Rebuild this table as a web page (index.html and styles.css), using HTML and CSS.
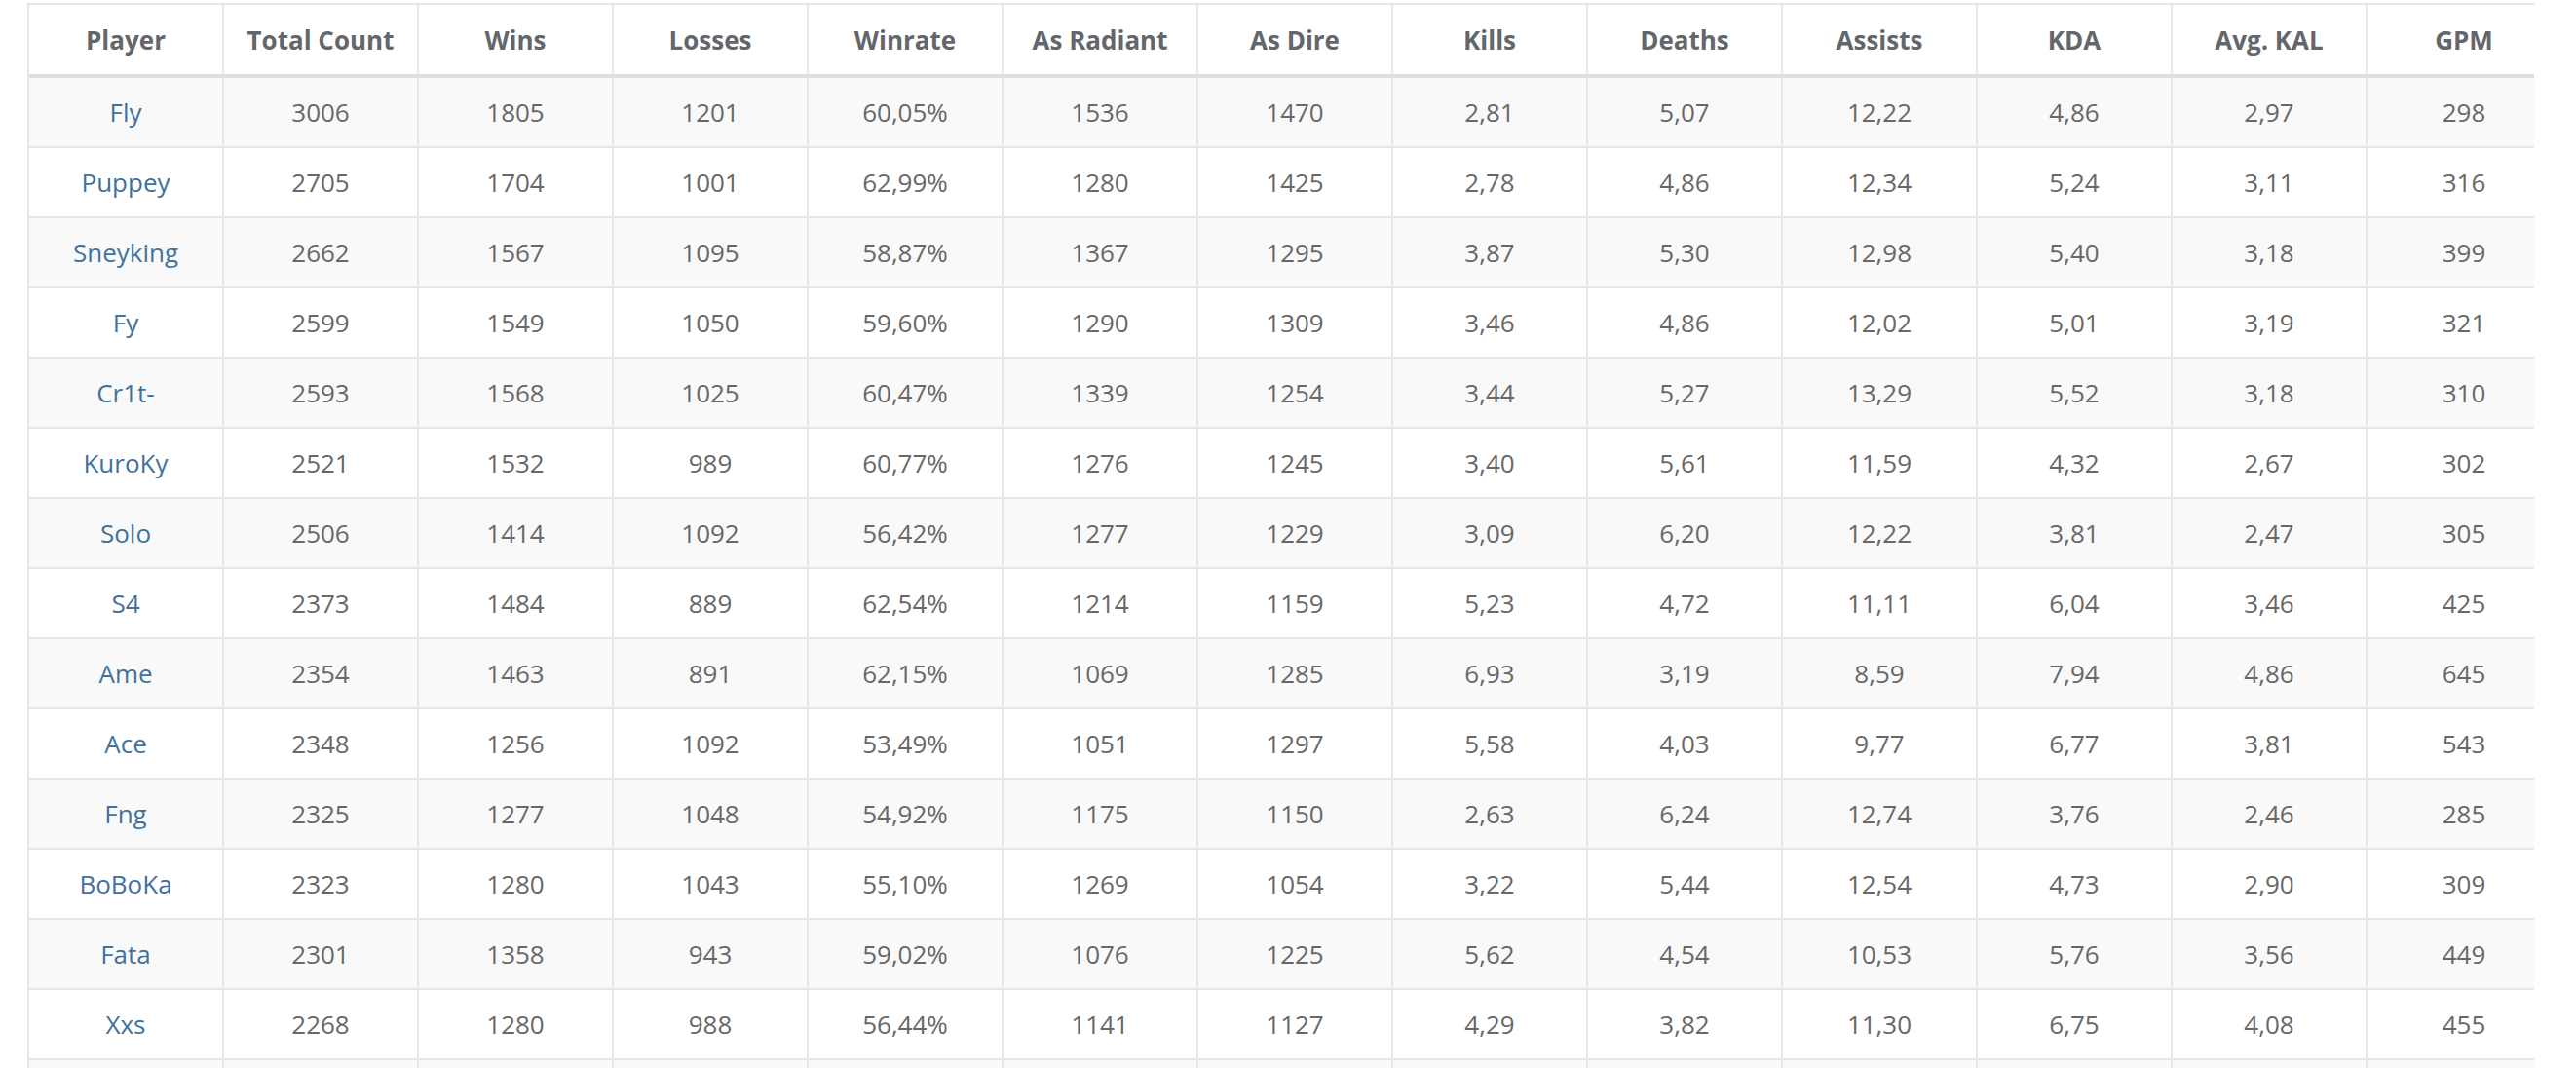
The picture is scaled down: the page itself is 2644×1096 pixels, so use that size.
FILE: index.html
```html
<!DOCTYPE html>
<html>
<head>
<meta charset="utf-8">
<link rel="stylesheet" href="styles.css">
</head>
<body>
<div class="wrap">
<table class="stats">
<colgroup>
<col class="col"><col class="col"><col class="col"><col class="col"><col class="col"><col class="col"><col class="col"><col class="col"><col class="col"><col class="col"><col class="col"><col class="col"><col class="col">
</colgroup>
<thead>
<tr><th>Player</th><th>Total Count</th><th>Wins</th><th>Losses</th><th>Winrate</th><th>As Radiant</th><th>As Dire</th><th>Kills</th><th>Deaths</th><th>Assists</th><th>KDA</th><th>Avg. KAL</th><th>GPM</th></tr>
</thead>
<tbody>
<tr><td><a href="#">Fly</a></td><td>3006</td><td>1805</td><td>1201</td><td>60,05%</td><td>1536</td><td>1470</td><td>2,81</td><td>5,07</td><td>12,22</td><td>4,86</td><td>2,97</td><td>298</td></tr>
<tr><td><a href="#">Puppey</a></td><td>2705</td><td>1704</td><td>1001</td><td>62,99%</td><td>1280</td><td>1425</td><td>2,78</td><td>4,86</td><td>12,34</td><td>5,24</td><td>3,11</td><td>316</td></tr>
<tr><td><a href="#">Sneyking</a></td><td>2662</td><td>1567</td><td>1095</td><td>58,87%</td><td>1367</td><td>1295</td><td>3,87</td><td>5,30</td><td>12,98</td><td>5,40</td><td>3,18</td><td>399</td></tr>
<tr><td><a href="#">Fy</a></td><td>2599</td><td>1549</td><td>1050</td><td>59,60%</td><td>1290</td><td>1309</td><td>3,46</td><td>4,86</td><td>12,02</td><td>5,01</td><td>3,19</td><td>321</td></tr>
<tr><td><a href="#">Cr1t-</a></td><td>2593</td><td>1568</td><td>1025</td><td>60,47%</td><td>1339</td><td>1254</td><td>3,44</td><td>5,27</td><td>13,29</td><td>5,52</td><td>3,18</td><td>310</td></tr>
<tr><td><a href="#">KuroKy</a></td><td>2521</td><td>1532</td><td>989</td><td>60,77%</td><td>1276</td><td>1245</td><td>3,40</td><td>5,61</td><td>11,59</td><td>4,32</td><td>2,67</td><td>302</td></tr>
<tr><td><a href="#">Solo</a></td><td>2506</td><td>1414</td><td>1092</td><td>56,42%</td><td>1277</td><td>1229</td><td>3,09</td><td>6,20</td><td>12,22</td><td>3,81</td><td>2,47</td><td>305</td></tr>
<tr><td><a href="#">S4</a></td><td>2373</td><td>1484</td><td>889</td><td>62,54%</td><td>1214</td><td>1159</td><td>5,23</td><td>4,72</td><td>11,11</td><td>6,04</td><td>3,46</td><td>425</td></tr>
<tr><td><a href="#">Ame</a></td><td>2354</td><td>1463</td><td>891</td><td>62,15%</td><td>1069</td><td>1285</td><td>6,93</td><td>3,19</td><td>8,59</td><td>7,94</td><td>4,86</td><td>645</td></tr>
<tr><td><a href="#">Ace</a></td><td>2348</td><td>1256</td><td>1092</td><td>53,49%</td><td>1051</td><td>1297</td><td>5,58</td><td>4,03</td><td>9,77</td><td>6,77</td><td>3,81</td><td>543</td></tr>
<tr><td><a href="#">Fng</a></td><td>2325</td><td>1277</td><td>1048</td><td>54,92%</td><td>1175</td><td>1150</td><td>2,63</td><td>6,24</td><td>12,74</td><td>3,76</td><td>2,46</td><td>285</td></tr>
<tr><td><a href="#">BoBoKa</a></td><td>2323</td><td>1280</td><td>1043</td><td>55,10%</td><td>1269</td><td>1054</td><td>3,22</td><td>5,44</td><td>12,54</td><td>4,73</td><td>2,90</td><td>309</td></tr>
<tr><td><a href="#">Fata</a></td><td>2301</td><td>1358</td><td>943</td><td>59,02%</td><td>1076</td><td>1225</td><td>5,62</td><td>4,54</td><td>10,53</td><td>5,76</td><td>3,56</td><td>449</td></tr>
<tr><td><a href="#">Xxs</a></td><td>2268</td><td>1280</td><td>988</td><td>56,44%</td><td>1141</td><td>1127</td><td>4,29</td><td>3,82</td><td>11,30</td><td>6,75</td><td>4,08</td><td>455</td></tr>
<tr class="last"><td></td><td></td><td></td><td></td><td></td><td></td><td></td><td></td><td></td><td></td><td></td><td></td><td></td></tr>
</tbody>
</table>
</div>
</body>
</html>
```

FILE: styles.css
```css
html, body {
  margin: 0;
  padding: 0;
  background: #ffffff;
}

body {
  font-family: "Open Sans", "Liberation Sans", sans-serif;
  font-size: 26px;
  color: #666666;
}

.wrap {
  margin: 3px 0 0 28px;
  width: 2573px;
  overflow: hidden;
}

.stats {
  width: 2602px;
  table-layout: fixed;
  border-collapse: separate;
  border-spacing: 0;
  border-top: 2px solid #e6e6e6;
  border-left: 2px solid #e6e6e6;
}

.col {
  width: 200px;
}

.stats th,
.stats td {
  text-align: center;
  vertical-align: middle;
  line-height: 40px;
  border-right: 2px solid #e6e6e6;
  border-bottom: 2px solid #e6e6e6;
  white-space: nowrap;
  overflow: hidden;
}

.stats th {
  font-weight: 700;
  color: #63676b;
  padding: 16px 4px 15px;
  border-bottom: 4px solid #e0e0e0;
  background: #ffffff;
}

.stats td {
  padding: 15px 4px;
  font-weight: 400;
  color: #686868;
}

.stats tbody tr:nth-child(odd) td {
  background: #f9f9f9;
}

.stats tbody tr:nth-child(even) td {
  background: #ffffff;
}

.stats a {
  color: #41729d;
  text-decoration: none;
}
```
